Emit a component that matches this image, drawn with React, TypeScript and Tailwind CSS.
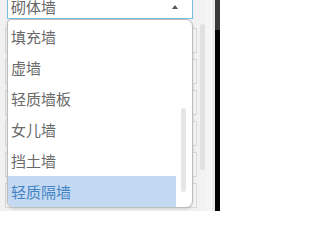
import React from "react";

const options = ["填充墙", "虚墙", "轻质墙板", "女儿墙", "挡土墙", "轻质隔墙"];
const selected = "轻质隔墙";

export default function App() {
  return (
    <div
      className="relative w-[220px] h-[211px] overflow-hidden flex bg-[#f1f1f1]"
      style={{ fontFamily: '"Noto Sans CJK SC", "Noto Sans", sans-serif' }}
    >
      {/* form area behind the menu */}
      <div className="w-[200px] h-full flex flex-col pl-[5px] pr-[3px]">
        <div className="-mt-[6px] ml-[2px] mr-[4px] h-[25px] bg-white border border-[#74bee6] flex items-center justify-between pl-[3px] pr-[14px] shrink-0">
          <span className="text-[15px] leading-none text-[#666]">砌体墙</span>
          <svg width="6" height="4" viewBox="0 0 6 4">
            <path d="M0 4 L3 0 L6 4 Z" fill="#555" />
          </svg>
        </div>
        <div className="flex flex-col gap-[6px] mt-[9px]">
          {Array.from({ length: 7 }).map((_, i) => (
            <div key={i} className="h-[25px] bg-[#f6f6f6] border border-[#d9d9d9] shrink-0" />
          ))}
        </div>
      </div>

      {/* page scrollbar */}
      <div className="w-[6px] h-full bg-[#f3f3f3] pt-[24px] shrink-0">
        <div className="w-[5px] h-[146px] rounded-full bg-[#e1e1e1]" />
      </div>
      <div className="w-[5px] h-full bg-[#f5f5f5] shrink-0" />
      <div className="w-[1px] h-full bg-white shrink-0" />
      <div className="w-[3px] h-full bg-[#ececec] shrink-0" />
      <div className="w-[5px] h-full flex flex-col shrink-0">
        <div className="h-[30px] bg-[#3a3a3a]" />
        <div className="flex-1 bg-[#050505]" />
      </div>

      {/* open dropdown menu */}
      <div className="absolute left-[7px] top-[19px] w-[186px] h-[189px] bg-white border border-[#bdbdbd] rounded-tl-[4px] rounded-tr-[7px] rounded-b-[7px] shadow-[0_1px_3px_rgba(0,0,0,0.15)] overflow-hidden flex">
        <ul className="w-[168px] flex flex-col pt-[1px]">
          {options.map((o) => (
            <li
              key={o}
              className={`h-[31px] flex items-center pl-[3px] text-[15px] leading-none shrink-0 ${
                o === selected ? "bg-[#c3daf2] text-[#4584c4]" : "text-[#6a6a6a]"
              }`}
            >
              {o}
            </li>
          ))}
        </ul>
        <div className="flex-1 pl-[5px] pt-[88px]">
          <div className="w-[5px] h-[84px] rounded-full bg-[#e6e6e6]" />
        </div>
      </div>
    </div>
  );
}
